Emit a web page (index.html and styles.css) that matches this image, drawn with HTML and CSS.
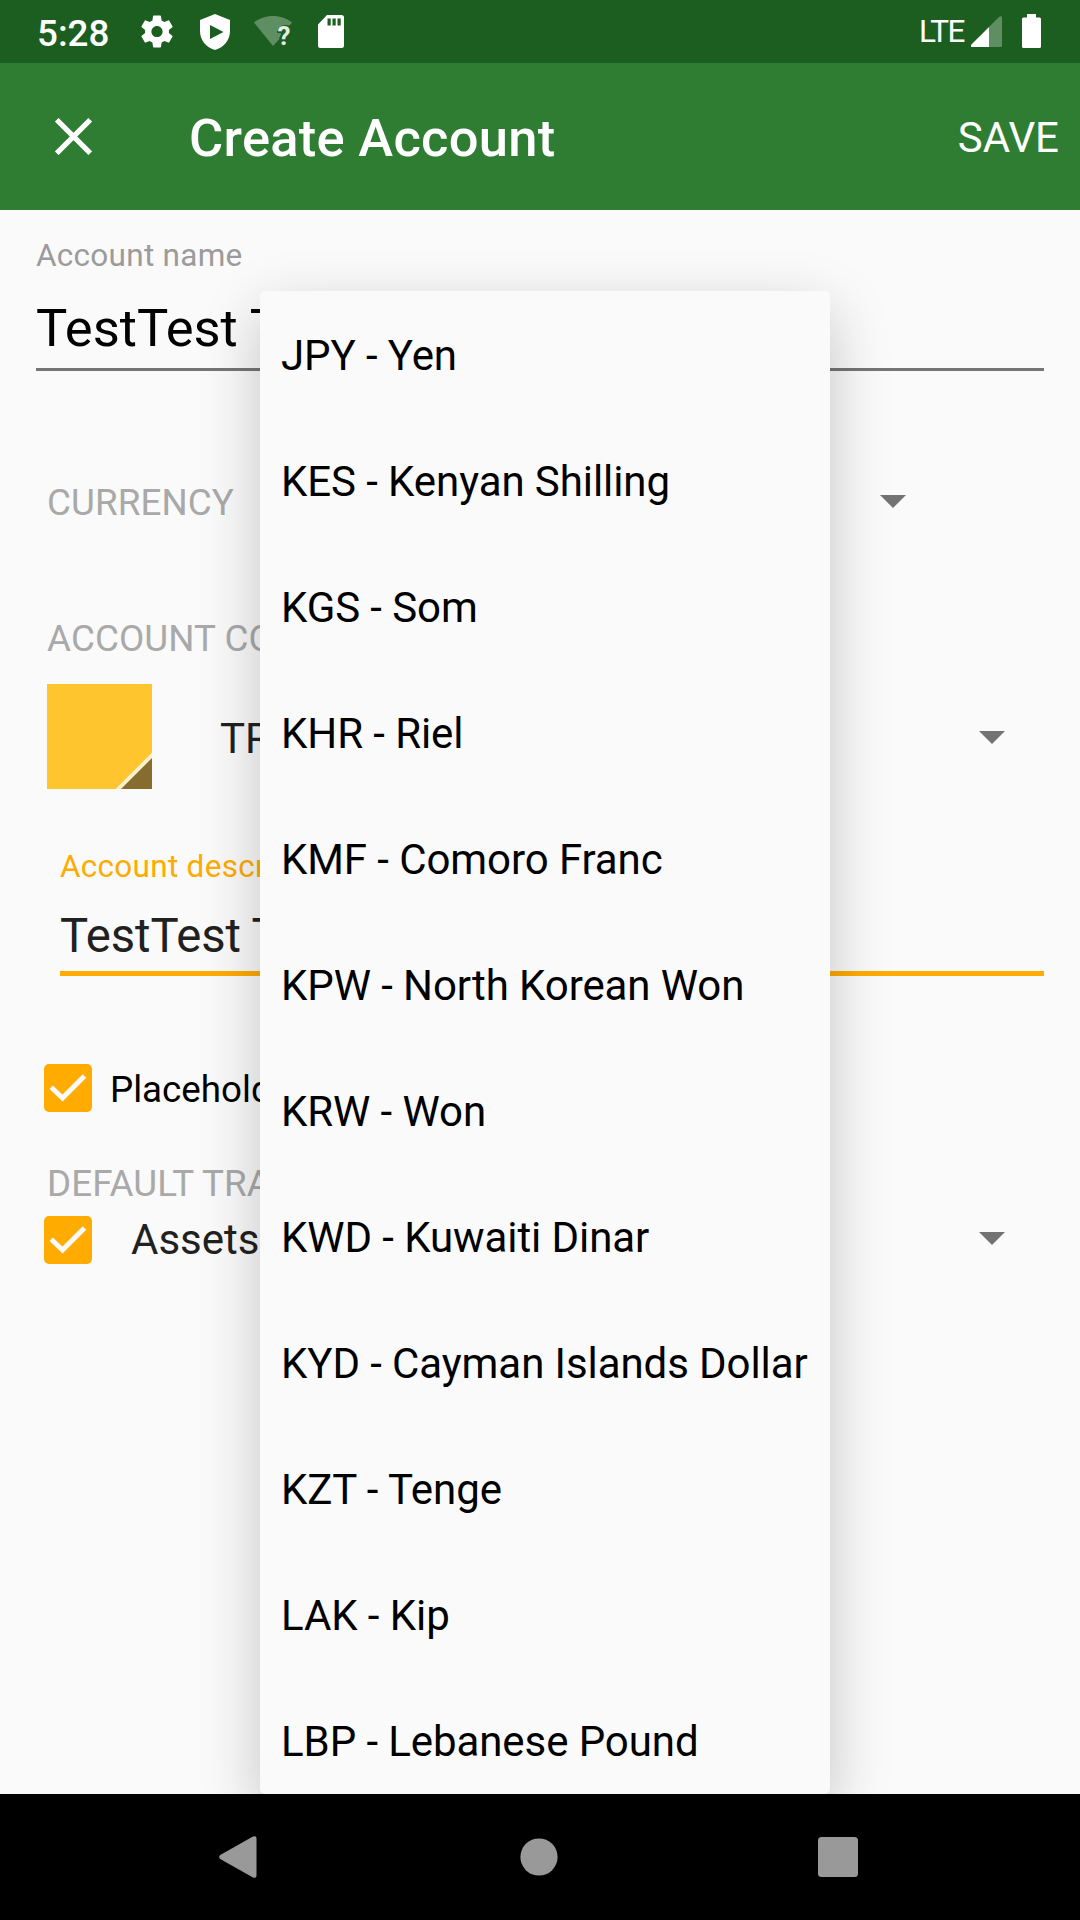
FILE: index.html
```html
<!DOCTYPE html>
<html lang="en">
<head>
<meta charset="utf-8">
<title>Create Account</title>
<link rel="stylesheet" href="styles.css">
</head>
<body>
<div class="screen">
  <header class="status-bar">
    <span class="clock">5:28</span>
    <svg class="status-icon gear" viewBox="2 2 20 20"><path fill="#fff" d="M19.43 12.98c.04-.32.07-.64.07-.98s-.03-.66-.07-.98l2.11-1.65c.19-.15.24-.42.12-.64l-2-3.46c-.12-.22-.39-.3-.61-.22l-2.49 1c-.52-.4-1.08-.73-1.69-.98l-.38-2.65C14.46 2.18 14.25 2 14 2h-4c-.25 0-.46.18-.49.42l-.38 2.65c-.61.25-1.17.59-1.69.98l-2.49-1c-.23-.09-.49 0-.61.22l-2 3.46c-.13.22-.07.49.12.64l2.11 1.65c-.04.32-.07.65-.07.98s.03.66.07.98l-2.11 1.65c-.19.15-.24.42-.12.64l2 3.46c.12.22.39.3.61.22l2.49-1c.52.4 1.08.73 1.69.98l.38 2.65c.03.24.24.42.49.42h4c.25 0 .46-.18.49-.42l.38-2.65c.61-.25 1.17-.59 1.69-.98l2.49 1c.23.09.49 0 .61-.22l2-3.46c.12-.22.07-.49-.12-.64l-2.11-1.65zM12 15.5c-1.93 0-3.5-1.57-3.5-3.5s1.57-3.5 3.5-3.5 3.5 1.57 3.5 3.5-1.57 3.5-3.5 3.5z"/></svg>
    <svg class="status-icon shield" viewBox="0 0 30 36"><path fill="#fff" fill-rule="evenodd" d="M15 0L30 6V17C30 26 24 33.500 15 36C6 33.500 0 26 0 17V6zM10 11V25L23.500 18z"/></svg>
    <svg class="status-icon wifi" viewBox="0 0 38 32"><path fill="#fff" fill-opacity=".3" d="M0 7.500C5 3.500 11.500 1 19 1S33 3.500 38 7.500L35.500 10.500C29 8.500 23 12 23 18H27C27 21 25 22 25 24.500L19 31z"/><text class="wifi-mark" x="23.500" y="30">?</text></svg>
    <svg class="status-icon card" viewBox="0 0 26 33"><path fill="#fff" fill-rule="evenodd" d="M9 0H23.500Q26 0 26 2.500V30.500Q26 33 23.500 33H2.500Q0 33 0 30.500V9.500zM9.500 3.500V10.500H12.700V3.500zM14.500 3.500V10.500H17.700V3.500zM19.500 3.500V10.500H22.700V3.500z"/></svg>
    <span class="network">LTE</span>
    <svg class="status-icon signal" viewBox="0 0 31 31"><path fill="#fff" fill-opacity=".3" d="M18 11L28 1Q31-1 31 2V29.500Q31 31 29.500 31H18z"/><path fill="#fff" d="M18 11V31H1Q-.6 31 .2 28.800z"/></svg>
    <svg class="status-icon battery" viewBox="0 0 19 34"><path fill="#fff" d="M5 0H14V3.500H17.500Q19 3.500 19 5V32.500Q19 34 17.500 34H1.500Q0 34 0 32.500V5Q0 3.500 1.500 3.500H5z"/></svg>
  </header>

  <div class="app-bar">
    <svg class="close" viewBox="0 0 36 36"><path fill="none" stroke="#fff" stroke-width="5" d="M1.700 1.700L34.300 34.300M34.300 1.700L1.700 34.300"/></svg>
    <h1 class="title">Create Account</h1>
    <span class="save">SAVE</span>
  </div>

  <main class="form">
    <section class="field name-field">
      <label class="field-label">Account name</label>
      <div class="name-value">TestTest T</div>
    </section>

    <section class="currency-row">
      <span class="caption">CURRENCY</span>
      <svg class="caret" viewBox="0 0 26 13"><path d="M0 0H26L13 13z"/></svg>
    </section>

    <div class="caption color-caption">ACCOUNT CO</div>
    <section class="type-row">
      <svg class="swatch" viewBox="0 0 105 105"><path fill="#fec52e" d="M0 0H105V105H0z"/><path fill="#fff1cb" d="M105 68.500V105H68.500z"/><path fill="#866d2f" d="M105 74V105H74z"/></svg>
      <span class="type-value">TR</span>
      <svg class="caret" viewBox="0 0 26 13"><path d="M0 0H26L13 13z"/></svg>
    </section>

    <section class="field description-field">
      <label class="field-label active">Account descr</label>
      <div class="description-value">TestTest T</div>
    </section>

    <section class="placeholder-row">
      <svg class="checkbox" viewBox="0 0 48 48"><rect width="48" height="48" rx="5" fill="#ffab00"/><path fill="none" stroke="#fafafa" stroke-width="5" d="M7.200 23.200L18.500 34L40.500 12"/></svg>
      <span class="placeholder-text">Placehold</span>
    </section>

    <div class="caption transfer-caption">DEFAULT TRA</div>
    <section class="transfer-row">
      <svg class="checkbox" viewBox="0 0 48 48"><rect width="48" height="48" rx="5" fill="#ffab00"/><path fill="none" stroke="#fafafa" stroke-width="5" d="M7.200 23.200L18.500 34L40.500 12"/></svg>
      <span class="transfer-value">Assets</span>
      <svg class="caret" viewBox="0 0 26 13"><path d="M0 0H26L13 13z"/></svg>
    </section>
  </main>

  <ul class="currency-menu">
    <li>JPY - Yen</li>
    <li>KES - Kenyan Shilling</li>
    <li>KGS - Som</li>
    <li>KHR - Riel</li>
    <li>KMF - Comoro Franc</li>
    <li>KPW - North Korean Won</li>
    <li>KRW - Won</li>
    <li>KWD - Kuwaiti Dinar</li>
    <li>KYD - Cayman Islands Dollar</li>
    <li>KZT - Tenge</li>
    <li>LAK - Kip</li>
    <li>LBP - Lebanese Pound</li>
  </ul>

  <nav class="nav-bar">
    <svg class="nav-back" viewBox="0 0 38 42"><path fill="#999" d="M1.200 19L34 .6Q37.500-.8 37.500 2.500V39.500Q37.500 42.800 34 41.400L1.200 23Q-.8 21 1.200 19z"/></svg>
    <svg class="nav-home" viewBox="0 0 38 38"><circle cx="19" cy="19" r="18.600" fill="#999"/></svg>
    <svg class="nav-recent" viewBox="0 0 40 40"><rect width="40" height="40" rx="3.500" fill="#999"/></svg>
  </nav>
</div>
</body>
</html>
```
FILE: styles.css
```css
* { box-sizing: border-box; }

body {
  margin: 0;
  font-family: Roboto, "Liberation Sans", sans-serif;
  font-size: 42px;
  color: #000;
  background: #fafafa;
}

svg { display: block; flex: none; }

.screen {
  position: relative;
  display: flex;
  flex-direction: column;
  width: 1080px;
  height: 1920px;
  overflow: hidden;
}

/* Status bar */
.status-bar {
  display: flex;
  align-items: flex-start;
  height: 63px;
  padding: 0 39px 0 37px;
  background: #1b5e20;
  color: #fff;
}

.clock {
  width: 104px;
  padding-top: 4px;
  font-size: 36.75px;
  font-weight: 500;
  line-height: 59px;
}

.gear { width: 32px; height: 33px; margin-top: 15px; }
.shield { width: 30px; height: 36px; margin: 14px 0 0 27px; }
.wifi { width: 38px; height: 32px; margin: 15px 0 0 24px; overflow: visible; }
.wifi-mark { font-size: 26px; font-weight: 700; fill: #e4ece4; }
.card { width: 26px; height: 33px; margin: 15px 0 0 26px; }

.network {
  width: 52px;
  margin-left: auto;
  padding-top: 2px;
  font-size: 31.5px;
  line-height: 60px;
  letter-spacing: -1.5px;
}

.signal { width: 31px; height: 31px; margin-top: 16px; }
.battery { width: 19px; height: 34px; margin: 14px 0 0 20px; }

/* App bar */
.app-bar {
  display: flex;
  align-items: center;
  height: 147px;
  padding: 0 21px 0 55px;
  background: #2e7d32;
  color: #fff;
}

.close { width: 37px; height: 37px; }

.title {
  margin: 3px auto 0 97px;
  font-size: 52.5px;
  font-weight: 500;
  line-height: 60px;
  letter-spacing: .27px;
}

.save { padding-top: 2px; line-height: 60px; }

/* Form */
.form { flex: 1; padding: 26px 36px 0; }

.field-label {
  display: block;
  height: 40px;
  font-size: 31.5px;
  line-height: 40px;
  letter-spacing: .28px;
  color: #9b9b9b;
}

.field-label.active { color: #ffab00; }

.name-field { height: 135px; }

.name-value {
  height: 95px;
  padding-top: 22px;
  border-bottom: 3px solid #757575;
  font-size: 52.5px;
  line-height: 60px;
}

.caption {
  height: 50px;
  font-size: 36.75px;
  line-height: 50px;
  letter-spacing: .1px;
  color: #a9a9a9;
}

.currency-row {
  display: flex;
  justify-content: space-between;
  align-items: center;
  margin-top: 107px;
  padding: 0 138px 0 11px;
}

.caret { width: 26px; height: 13px; fill: #737373; }

.currency-row .caret { margin-bottom: 3px; }

.color-caption { margin: 86px 0 0 11px; }

.type-row {
  display: flex;
  align-items: center;
  margin-top: 20px;
  padding: 0 3px 0 11px;
}

.swatch { width: 105px; height: 105px; }

.type-value {
  flex: 1;
  margin-left: 68px;
  padding-top: 4px;
  line-height: 60px;
  color: #212121;
}

.description-field { margin: 58px 0 0 24px; }

.description-value {
  height: 89px;
  padding-top: 19px;
  border-bottom: 5px solid #ffab00;
  font-size: 47.25px;
  line-height: 60px;
  letter-spacing: -.1px;
  color: #212121;
}

.placeholder-row {
  display: flex;
  align-items: center;
  height: 50px;
  margin-top: 87px;
  padding-left: 8px;
}

.checkbox { width: 48px; height: 48px; }

.placeholder-text {
  margin-left: 18px;
  padding-top: 3px;
  font-size: 36.75px;
  line-height: 47px;
}

.transfer-caption { margin: 46px 0 0 11px; }

.transfer-row {
  display: flex;
  align-items: center;
  height: 60px;
  margin-top: 1px;
  padding: 0 3px 0 8px;
}

.transfer-value {
  flex: 1;
  margin-left: 39px;
  line-height: 60px;
  color: #212121;
}

.type-row .caret,
.transfer-row .caret { margin-right: 36px; }

.type-row .caret { margin-top: 2px; }
.transfer-row .caret { margin-bottom: 3px; }

/* Currency dropdown, floating above the form */
.currency-menu {
  position: absolute;
  top: 291px;
  left: 260px;
  width: 570px;
  height: 1503px;
  margin: 0;
  padding: 2px 0 0;
  overflow: hidden;
  list-style: none;
  border-radius: 5px;
  background: #fafafa;
  box-shadow: 0 20px 60px rgba(0, 0, 0, .22);
}

.currency-menu li {
  height: 126px;
  padding-left: 21px;
  line-height: 126px;
  letter-spacing: -.08px;
  white-space: nowrap;
}

/* System navigation */
.nav-bar {
  position: relative;
  z-index: 1;
  display: flex;
  align-items: center;
  height: 126px;
  padding: 0 222px 0 219px;
  background: #000;
}

.nav-back { width: 38px; height: 42px; }
.nav-home { width: 38px; height: 38px; margin: 0 auto 0 263px; }
.nav-recent { width: 40px; height: 40px; }
```
